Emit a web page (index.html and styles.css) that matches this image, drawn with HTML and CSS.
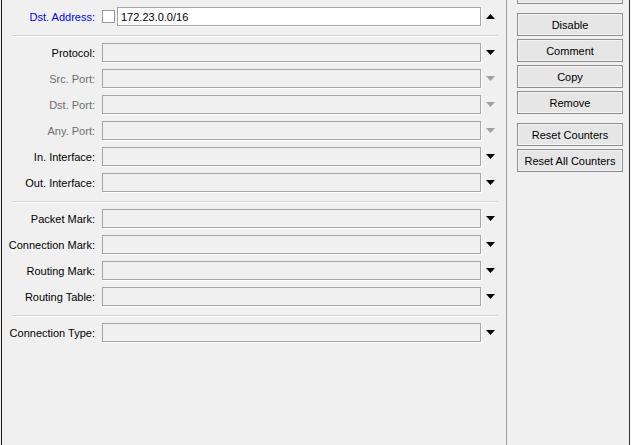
FILE: index.html
```html
<!DOCTYPE html>
<html>
<head>
<meta charset="utf-8">
<link rel="stylesheet" href="styles.css">
</head>
<body>
<div class="window">
  <div class="form">
    <div class="section">
      <div class="row">
        <span class="lbl lbl-blue">Dst. Address:</span>
        <div class="field-group">
          <span class="check"></span>
          <div class="input input-white">172.23.0.0/16</div>
        </div>
        <svg class="arrow" viewBox="0 0 9 5" width="9" height="5"><polygon points="4.5,0 9,5 0,5"/></svg>
      </div>
    </div>
    <div class="sep"></div>
    <div class="section">
      <div class="row">
        <span class="lbl">Protocol:</span>
        <div class="input"></div>
        <svg class="arrow" viewBox="0 0 9 5" width="9" height="5"><polygon points="0,0 9,0 4.5,5"/></svg>
      </div>
      <div class="row">
        <span class="lbl lbl-dim">Src. Port:</span>
        <div class="input"></div>
        <svg class="arrow arrow-dim" viewBox="0 0 9 5" width="9" height="5"><polygon points="0,0 9,0 4.5,5"/></svg>
      </div>
      <div class="row">
        <span class="lbl lbl-dim">Dst. Port:</span>
        <div class="input"></div>
        <svg class="arrow arrow-dim" viewBox="0 0 9 5" width="9" height="5"><polygon points="0,0 9,0 4.5,5"/></svg>
      </div>
      <div class="row">
        <span class="lbl lbl-dim">Any. Port:</span>
        <div class="input"></div>
        <svg class="arrow arrow-dim" viewBox="0 0 9 5" width="9" height="5"><polygon points="0,0 9,0 4.5,5"/></svg>
      </div>
      <div class="row">
        <span class="lbl">In. Interface:</span>
        <div class="input"></div>
        <svg class="arrow" viewBox="0 0 9 5" width="9" height="5"><polygon points="0,0 9,0 4.5,5"/></svg>
      </div>
      <div class="row">
        <span class="lbl">Out. Interface:</span>
        <div class="input"></div>
        <svg class="arrow" viewBox="0 0 9 5" width="9" height="5"><polygon points="0,0 9,0 4.5,5"/></svg>
      </div>
    </div>
    <div class="sep"></div>
    <div class="section">
      <div class="row">
        <span class="lbl">Packet Mark:</span>
        <div class="input"></div>
        <svg class="arrow" viewBox="0 0 9 5" width="9" height="5"><polygon points="0,0 9,0 4.5,5"/></svg>
      </div>
      <div class="row">
        <span class="lbl">Connection Mark:</span>
        <div class="input"></div>
        <svg class="arrow" viewBox="0 0 9 5" width="9" height="5"><polygon points="0,0 9,0 4.5,5"/></svg>
      </div>
      <div class="row">
        <span class="lbl">Routing Mark:</span>
        <div class="input"></div>
        <svg class="arrow" viewBox="0 0 9 5" width="9" height="5"><polygon points="0,0 9,0 4.5,5"/></svg>
      </div>
      <div class="row">
        <span class="lbl">Routing Table:</span>
        <div class="input"></div>
        <svg class="arrow" viewBox="0 0 9 5" width="9" height="5"><polygon points="0,0 9,0 4.5,5"/></svg>
      </div>
    </div>
    <div class="sep"></div>
    <div class="section">
      <div class="row">
        <span class="lbl">Connection Type:</span>
        <div class="input"></div>
        <svg class="arrow" viewBox="0 0 9 5" width="9" height="5"><polygon points="0,0 9,0 4.5,5"/></svg>
      </div>
    </div>
  </div>
  <div class="side">
    <div class="btn btn-cut"></div>
    <div class="btn group-start">Disable</div>
    <div class="btn">Comment</div>
    <div class="btn">Copy</div>
    <div class="btn">Remove</div>
    <div class="btn group-start">Reset Counters</div>
    <div class="btn">Reset All Counters</div>
  </div>
</div>
</body>
</html>
```
FILE: styles.css
```css
html, body {
  margin: 0;
  padding: 0;
  background: #f0f0f0;
  overflow: hidden;
}

body {
  font-family: "Liberation Sans", Arial, sans-serif;
  font-size: 11px;
  color: #000;
}

.window {
  display: flex;
  height: 445px;
  width: 629px;
  margin-left: 1px;
  border-left: 1px solid #1a1a1a;
  border-right: 1px solid #3a3a3a;
  box-sizing: border-box;
  background: #f0f0f0;
}

.form {
  width: 504px;
  flex: none;
  padding-top: 7px;
  box-sizing: border-box;
}

.section {
  display: flex;
  flex-direction: column;
  gap: 7px;
}

.row {
  display: flex;
  align-items: center;
  height: 19px;
}

.lbl {
  width: 93px;
  margin-right: 7px;
  text-align: right;
  white-space: nowrap;
  line-height: 19px;
  padding-top: 1px;
  flex: none;
}

.lbl-blue {
  color: #0000ff;
}

.lbl-dim {
  color: #6d6d6d;
}

.field-group {
  display: flex;
  align-items: center;
  width: 379px;
  flex: none;
}

.check {
  width: 13px;
  height: 13px;
  box-sizing: border-box;
  border: 1px solid #9a9a9a;
  background: #fff;
  margin-right: 2px;
  flex: none;
}

.input {
  width: 379px;
  height: 19px;
  box-sizing: border-box;
  border: 1px solid #a5a5a5;
  box-shadow: 1px 1px 0 #ffffff;
  background: #f0f0f0;
  flex: none;
  padding-left: 3px;
  padding-top: 1px;
  line-height: 17px;
  white-space: nowrap;
}

.field-group .input {
  width: 364px;
}

.input-white {
  background: #ffffff;
}

.arrow {
  margin-left: 5px;
  flex: none;
  fill: #000;
}

.arrow-dim {
  fill: #a0a0a0;
}

.sep {
  margin: 9px 0 6px 10px;
  width: 486px;
  height: 1px;
  background: #d5d5d5;
  border-bottom: 1px solid #fafafa;
}

.side {
  flex: 1;
  border-left: 1px solid #a0a0a0;
  padding-left: 10px;
  display: flex;
  flex-direction: column;
  gap: 3px;
  overflow: hidden;
}

.btn {
  width: 106px;
  height: 23px;
  box-sizing: border-box;
  border: 1px solid #8e8e8e;
  box-shadow: inset 0 0 0 1px #f4f4f4;
  background: #e6e6e6;
  text-align: center;
  line-height: 21px;
  padding-top: 1px;
  white-space: nowrap;
  flex: none;
}

.btn-cut {
  margin-top: -19px;
}

.group-start {
  margin-top: 6px;
}
```
